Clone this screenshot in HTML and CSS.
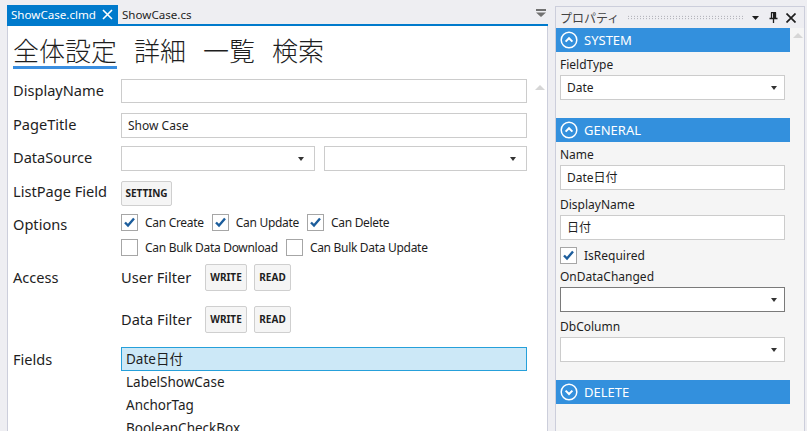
FILE: index.html
```html
<!DOCTYPE html>
<html>
<head>
<meta charset="utf-8">
<link rel="stylesheet" href="styles.css">
</head>
<body>
<div class="app">
  <div class="doc">
    <div class="tabstrip">
      <div class="tab active">ShowCase.clmd
        <svg class="tclose" width="11" height="11" viewBox="0 0 11 11"><path d="M1 1L10 10M10 1L1 10" stroke="#fff" stroke-width="1.6"/></svg>
      </div>
      <div class="tab">ShowCase.cs</div>
      <div class="spacer"></div>
      <svg class="overflow" width="10" height="8" viewBox="0 0 10 8"><rect x="0" y="0" width="10" height="2" fill="#717171"/><path d="M0 3.5H10L5 8Z" fill="#717171"/></svg>
    </div>
    <div class="editor">
      <div class="scrollup"></div>
      <div class="headtabs">
        <span class="ht active">全体設定</span>
        <span class="ht">詳細</span>
        <span class="ht">一覧</span>
        <span class="ht">検索</span>
      </div>
      <div class="form">
        <div class="row r1">
          <div class="lbl">DisplayName</div>
          <div class="ctl"><div class="input"></div></div>
        </div>
        <div class="row r2">
          <div class="lbl">PageTitle</div>
          <div class="ctl"><div class="input">Show Case</div></div>
        </div>
        <div class="row r3">
          <div class="lbl">DataSource</div>
          <div class="ctl sel2">
            <div class="select s1"><span class="arr"></span></div>
            <div class="select s2"><span class="arr"></span></div>
          </div>
        </div>
        <div class="row r4">
          <div class="lbl">ListPage Field</div>
          <div class="ctl"><div class="btn b-setting">SETTING</div></div>
        </div>
        <div class="row r5">
          <div class="lbl">Options</div>
          <div class="ctl opts">
            <div class="optline">
              <label class="cb"><span class="box on"><svg width="15" height="15" viewBox="0 0 15 15"><path d="M3 7.5L6 10.5L12 3.5" fill="none" stroke="#1c5d9c" stroke-width="2.4"/></svg></span>Can Create</label>
              <label class="cb"><span class="box on"><svg width="15" height="15" viewBox="0 0 15 15"><path d="M3 7.5L6 10.5L12 3.5" fill="none" stroke="#1c5d9c" stroke-width="2.4"/></svg></span>Can Update</label>
              <label class="cb"><span class="box on"><svg width="15" height="15" viewBox="0 0 15 15"><path d="M3 7.5L6 10.5L12 3.5" fill="none" stroke="#1c5d9c" stroke-width="2.4"/></svg></span>Can Delete</label>
            </div>
            <div class="optline">
              <label class="cb"><span class="box"></span>Can Bulk Data Download</label>
              <label class="cb"><span class="box"></span>Can Bulk Data Update</label>
            </div>
          </div>
        </div>
        <div class="row r6">
          <div class="lbl">Access</div>
          <div class="ctl access">
            <div class="acline">
              <span class="aclbl">User Filter</span>
              <div class="btn b-write">WRITE</div>
              <div class="btn b-read">READ</div>
            </div>
            <div class="acline">
              <span class="aclbl">Data Filter</span>
              <div class="btn b-write">WRITE</div>
              <div class="btn b-read">READ</div>
            </div>
          </div>
        </div>
        <div class="row r7">
          <div class="lbl">Fields</div>
          <div class="ctl list">
            <div class="item sel">Date日付</div>
            <div class="item">LabelShowCase</div>
            <div class="item">AnchorTag</div>
            <div class="item">BooleanCheckBox</div>
          </div>
        </div>
      </div>
    </div>
  </div>

  <div class="props">
    <div class="phead">
      <span class="ptitle">プロパティ</span>
      <span class="grip"></span>
      <svg class="pdrop" width="7" height="4" viewBox="0 0 7 4"><path d="M0 0H7L3.5 4Z" fill="#1e1e1e"/></svg>
      <svg class="ppin" width="9" height="11" viewBox="0 0 9 11"><path d="M2 0.5H7M2.5 0.5V6M6.5 0.5V6M0.5 6.5H8.5M4.5 6.5V11" fill="none" stroke="#1e1e1e" stroke-width="1.3"/><rect x="4" y="1" width="2.5" height="5" fill="#1e1e1e"/></svg>
      <svg class="pclose" width="10" height="10" viewBox="0 0 10 10"><path d="M0.5 0.5L9.5 9.5M9.5 0.5L0.5 9.5" stroke="#1e1e1e" stroke-width="1.7"/></svg>
    </div>
    <div class="pbody">
      <div class="pscroll"></div>
      <div class="pcontent">
        <div class="sech">
          <svg width="18" height="18" viewBox="0 0 18 18"><circle cx="9" cy="9" r="7.8" fill="none" stroke="#fff" stroke-width="1.5"/><path d="M5.6 10.6L9 7.2L12.4 10.6" fill="none" stroke="#fff" stroke-width="2"/></svg>
          <span>SYSTEM</span>
        </div>
        <div class="secbody">
          <div class="plbl">FieldType</div>
          <div class="pselect">Date<span class="arr"></span></div>
        </div>
        <div class="sech">
          <svg width="18" height="18" viewBox="0 0 18 18"><circle cx="9" cy="9" r="7.8" fill="none" stroke="#fff" stroke-width="1.5"/><path d="M5.6 10.6L9 7.2L12.4 10.6" fill="none" stroke="#fff" stroke-width="2"/></svg>
          <span>GENERAL</span>
        </div>
        <div class="secbody">
          <div class="plbl">Name</div>
          <div class="pinput">Date日付</div>
          <div class="plbl">DisplayName</div>
          <div class="pinput">日付</div>
          <label class="cb pcb"><span class="box on"><svg width="15" height="15" viewBox="0 0 15 15"><path d="M3 7.5L6 10.5L12 3.5" fill="none" stroke="#1c5d9c" stroke-width="2.4"/></svg></span>IsRequired</label>
          <div class="plbl">OnDataChanged</div>
          <div class="pselect focus"><span class="arr"></span></div>
          <div class="plbl">DbColumn</div>
          <div class="pselect"><span class="arr"></span></div>
        </div>
        <div class="sech">
          <svg width="18" height="18" viewBox="0 0 18 18"><circle cx="9" cy="9" r="7.8" fill="none" stroke="#fff" stroke-width="1.5"/><path d="M5.6 7.6L9 11L12.4 7.6" fill="none" stroke="#fff" stroke-width="2"/></svg>
          <span>DELETE</span>
        </div>
      </div>
    </div>
  </div>
</div>
</body>
</html>
```

FILE: styles.css
```css
* { box-sizing: border-box; }
html, body { margin: 0; padding: 0; }
body {
  width: 807px;
  height: 431px;
  overflow: hidden;
  background: #eeeef2;
  font-family: "Noto Sans", "Noto Sans CJK JP", sans-serif;
  color: #1e1e1e;
}
.app {
  display: flex;
  height: 431px;
}
.doc {
  width: 548px;
  padding-left: 7px;
  display: flex;
  flex-direction: column;
}
.tabstrip {
  height: 26px;
  flex: none;
  display: flex;
  align-items: flex-end;
  border-bottom: 2px solid #007acc;
}
.tab {
  height: 19px;
  display: flex;
  align-items: center;
  font-size: 11.6px;
  padding: 0 4px 0 4px;
  color: #1e1e1e;
}
.tab.active {
  background: #007acc;
  color: #fff;
  width: 111px;
  padding-right: 5px;
}
.tclose { margin-left: auto; }
.spacer { flex: 1; }
.overflow { margin: 0 2px 7px 0; }
.editor {
  position: relative;
  flex: 1;
  background: #fff;
  border-left: 1px solid #cccedb;
  border-right: 1px solid #cccedb;
  padding-left: 5px;
}
.scrollup {
  position: absolute;
  left: 527px;
  top: 59px;
  width: 0; height: 0;
  border-left: 5px solid transparent;
  border-right: 5px solid transparent;
  border-bottom: 5px solid #d6d6d6;
}
.headtabs {
  display: flex;
  gap: 17px;
  padding-top: 8px;
  height: 43px;
}
.ht {
  font-family: "Noto Sans CJK JP", sans-serif;
  font-size: 26px;
  line-height: 26px;
  padding-top: 3px;
  height: 35px;
  font-weight: 300;
}
.ht.active {
  border-bottom: 3px solid #3a8ee0;
}
.row { display: flex; }
.lbl {
  width: 108px;
  font-size: 14.6px;
  flex: none;
}
.ctl { flex: 1; padding-right: 20px; }
.input {
  height: 24px;
  border: 1px solid #cccccc;
  font-size: 12px;
  padding-left: 6px;
  line-height: 22px;
}
.r1 { margin-top: 10px; }
.r1 .lbl, .r2 .lbl { line-height: 22px; }
.r2 { margin-top: 10px; }
.r2 .input { height: 25px; line-height: 23px; }
.r3 { margin-top: 8px; }
.r3 .lbl { line-height: 22px; }
.sel2 { display: flex; gap: 9px; }
.select {
  position: relative;
  height: 25px;
  border: 1px solid #cccccc;
}
.s1 { width: 194px; flex: none; }
.s2 { flex: 1; }
.arr {
  position: absolute;
  right: 10px;
  top: 10px;
  width: 0; height: 0;
  border-left: 3.5px solid transparent;
  border-right: 3.5px solid transparent;
  border-top: 4px solid #333;
}
.r4 { margin-top: 9px; }
.r4 .lbl { line-height: 22px; }
.btn {
  display: inline-flex;
  align-items: center;
  justify-content: center;
  background: #f5f5f5;
  border: 1px solid #cfcfcf;
  border-radius: 2px;
  font-size: 10px;
  font-weight: bold;
  color: #1e1e1e;
}
.b-setting { width: 51px; height: 25px; }
.r5 { margin-top: 8px; }
.r5 .lbl { line-height: 20px; padding-top: 0; }
.optline { display: flex; height: 17px; margin-bottom: 8px; }
.cb {
  display: flex;
  align-items: center;
  font-size: 12px;
  letter-spacing: -0.3px;
  margin-right: 8px;
  height: 17px;
}
.box {
  width: 17px; height: 17px;
  border: 1px solid #a6a6a6;
  background: #fff;
  margin-right: 7px;
  display: flex;
  align-items: center;
  justify-content: center;
  flex: none;
}
.r6 { margin-top: 0; }
.r6 .lbl { line-height: 22px; padding-top: 2px; }
.acline { display: flex; align-items: center; height: 27px; margin-bottom: 15px; }
.aclbl { font-size: 14.6px; width: 84px; }
.b-write { width: 42px; height: 27px; margin-right: 7px; }
.b-read { width: 37px; height: 27px; }
.r7 { margin-top: -1px; }
.r7 .lbl { line-height: 24px; }
.item {
  height: 23px;
  font-size: 13.5px;
  padding-left: 5px;
  line-height: 23px;
}
.item.sel {
  height: 24px;
  line-height: 22px;
  background: #cce8f7;
  border: 1px solid #26a0da;
  padding-left: 4px;
}

/* properties */
.props {
  margin-top: 6px;
  margin-left: 7px;
  width: 250px;
  height: 425px;
  border: 1px solid #cccedb;
  border-bottom: none;
  background: #f5f5f5;
  display: flex;
  flex-direction: column;
}
.phead {
  height: 21px;
  flex: none;
  display: flex;
  align-items: center;
  background: #eeeef2;
  padding: 0 8px 0 4px;
}
.ptitle { font-size: 12px; color: #444; font-family: "Noto Sans CJK JP", sans-serif; }
.grip {
  flex: 1;
  height: 5px;
  margin: 0 8px 0 8px;
  background-image: radial-gradient(circle, #a0a0a8 0.6px, transparent 0.7px);
  background-size: 3px 2.5px;
}
.pdrop { margin-right: 10px; }
.ppin { margin-right: 8px; }
.pbody { flex: 1; display: flex; flex-direction: row-reverse; }
.pscroll {
  width: 14px;
  position: relative;
}
.pscroll::before {
  content: "";
  position: absolute;
  left: 3px; top: 5px;
  border-left: 5px solid transparent;
  border-right: 5px solid transparent;
  border-bottom: 5px solid #d6d6d6;
}
.pcontent { flex: 1; }
.sech {
  height: 24px;
  background: #3390dd;
  color: #fff;
  display: flex;
  align-items: center;
  padding-left: 4px;
  font-size: 13px;
}
.sech svg { margin-right: 6px; }
.secbody { padding: 0 5px 16px 4px; }
.plbl {
  font-size: 12px;
  height: 23px;
  padding-top: 5px;
  line-height: 16px;
}
.pinput, .pselect {
  position: relative;
  height: 25px;
  background: #fff;
  border: 1px solid #cccccc;
  font-size: 12px;
  line-height: 23px;
  padding-left: 6px;
  margin-bottom: 2px;
}
.pselect.focus { border-color: #7a7a7a; }
.pselect .arr { right: 7px; }
.pcb { margin-top: 7px; margin-bottom: 0; letter-spacing: 0; }
.pcb .box { margin-right: 7px; }
```
